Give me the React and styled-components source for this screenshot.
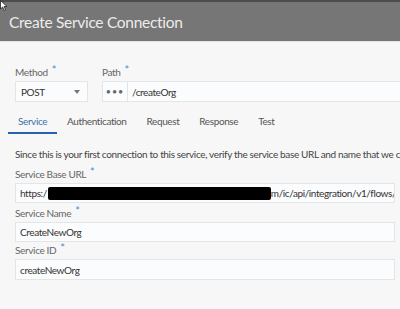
import React from "react";
import styled, { createGlobalStyle } from "styled-components";

const Global = createGlobalStyle`
  html, body { margin: 0; padding: 0; }
  body {
    width: 400px; height: 309px; overflow: hidden;
    background: #f7f7f7;
    font-family: Lato, "Open Sans", sans-serif;
  }
`;

const Page = styled.div`
  position: relative;
  width: 400px;
  height: 309px;
  overflow: hidden;
  background: #f7f7f7;
`;

const Header = styled.header`
  height: 39px;
  border-top: 2px solid #4c4c4c;
  border-bottom: 1px solid #dfe2e6;
  background: #767676;
  display: flex;
  align-items: center;
  padding-left: 9px;
  color: #ececec;
  font-size: 15.5px;
  letter-spacing: -0.3px;
`;

const Cursor = styled.svg`
  position: absolute;
  left: 0;
  top: 0;
`;

const Main = styled.main`
  padding-left: 15px;
  letter-spacing: -0.35px;
`;

const TopRow = styled.div`
  display: flex;
  gap: 14px;
  margin-top: 22px;
`;

const Field = styled.div`
  display: flex;
  flex-direction: column;
  width: ${(p) => p.$w || "auto"};
  flex: ${(p) => (p.$grow ? 1 : "none")};
`;

const Label = styled.label`
  display: block;
  height: 16px;
  font-size: 10px;
  line-height: 16px;
  color: #666;
  margin-top: ${(p) => p.$mt || 0}px;
  margin-bottom: 1px;
  white-space: nowrap;
  & > span {
    display: inline-block;
    color: #4a8cd0;
    margin-left: 4px;
    font-size: 11px;
    line-height: 11px;
    vertical-align: top;
  }
`;

const Box = styled.div`
  box-sizing: border-box;
  height: ${(p) => p.$h || 21}px;
  background: #fbfcfd;
  border: 1px solid #e4e5e6;
  display: flex;
  align-items: center;
  font-size: 10px;
  letter-spacing: -0.4px;
  color: #333;
  overflow: hidden;
  white-space: nowrap;
`;

const SelectBox = styled(Box)`
  justify-content: space-between;
  padding: 0 7px 0 5px;
`;

const Caret = styled.span`
  width: 0;
  height: 0;
  border-left: 3px solid transparent;
  border-right: 3px solid transparent;
  border-top: 4px solid #777;
`;

const PathGroup = styled.div`
  display: flex;
  margin-right: -20px;
`;

const Dots = styled(Box)`
  width: 26px;
  justify-content: center;
  color: #666;
  font-size: 9px;
  letter-spacing: 1px;
  flex: none;
`;

const PathInput = styled(Box)`
  flex: 1;
  border-left: none;
  padding-left: 4px;
`;

const Tabs = styled.nav`
  display: flex;
  margin: 8px 0 0 -7px;
`;

const Tab = styled.div`
  height: 22px;
  line-height: 22px;
  padding: 0 10px;
  font-size: 10px;
  letter-spacing: -0.4px;
  color: ${(p) => (p.$active ? "#3d6fa8" : "#555")};
  border-bottom: 2px solid ${(p) => (p.$active ? "#2563ad" : "transparent")};
`;

const Para = styled.p`
  margin: 12px 0 0;
  font-size: 10px;
  line-height: 16px;
  color: #444;
  white-space: nowrap;
`;

const Wide = styled(Box)`
  margin-right: 5px;
  padding-left: 4px;
`;

const Redact = styled.span`
  display: inline-block;
  flex: none;
  width: 223px;
  height: 13px;
  background: #000;
  border-radius: 2px;
  margin: 0 0 0 1px;
`;

export default function App() {
  return (
    <Page>
      <Global />
      <Header>Create Service Connection</Header>
      <Cursor width="10" height="12" viewBox="0 0 10 12">
        <path d="M0.5 0.5 L0.5 9 L2.6 7 L4.2 10.5 L5.6 9.9 L4 6.5 L7 6.5 Z" fill="#fff" stroke="#222" strokeWidth="0.8" />
      </Cursor>
      <Main>
        <TopRow>
          <Field $w="73px">
            <Label>Method<span>*</span></Label>
            <SelectBox>
              POST
              <Caret />
            </SelectBox>
          </Field>
          <Field $grow>
            <Label>Path<span>*</span></Label>
            <PathGroup>
              <Dots>•••</Dots>
              <PathInput>/createOrg</PathInput>
            </PathGroup>
          </Field>
        </TopRow>
        <Tabs>
          <Tab $active>Service</Tab>
          <Tab>Authentication</Tab>
          <Tab>Request</Tab>
          <Tab>Response</Tab>
          <Tab>Test</Tab>
        </Tabs>
        <Para>
          Since this is your first connection to this service, verify the service base URL and name that we c
        </Para>
        <Label $mt={4}>Service Base URL<span>*</span></Label>
        <Wide $h={20}>
          https:/<Redact />m/ic/api/integration/v1/flows/
        </Wide>
        <Label $mt={2}>Service Name<span>*</span></Label>
        <Wide $h={20}>CreateNewOrg</Wide>
        <Label>Service ID<span>*</span></Label>
        <Wide>createNewOrg</Wide>
      </Main>
    </Page>
  );
}
